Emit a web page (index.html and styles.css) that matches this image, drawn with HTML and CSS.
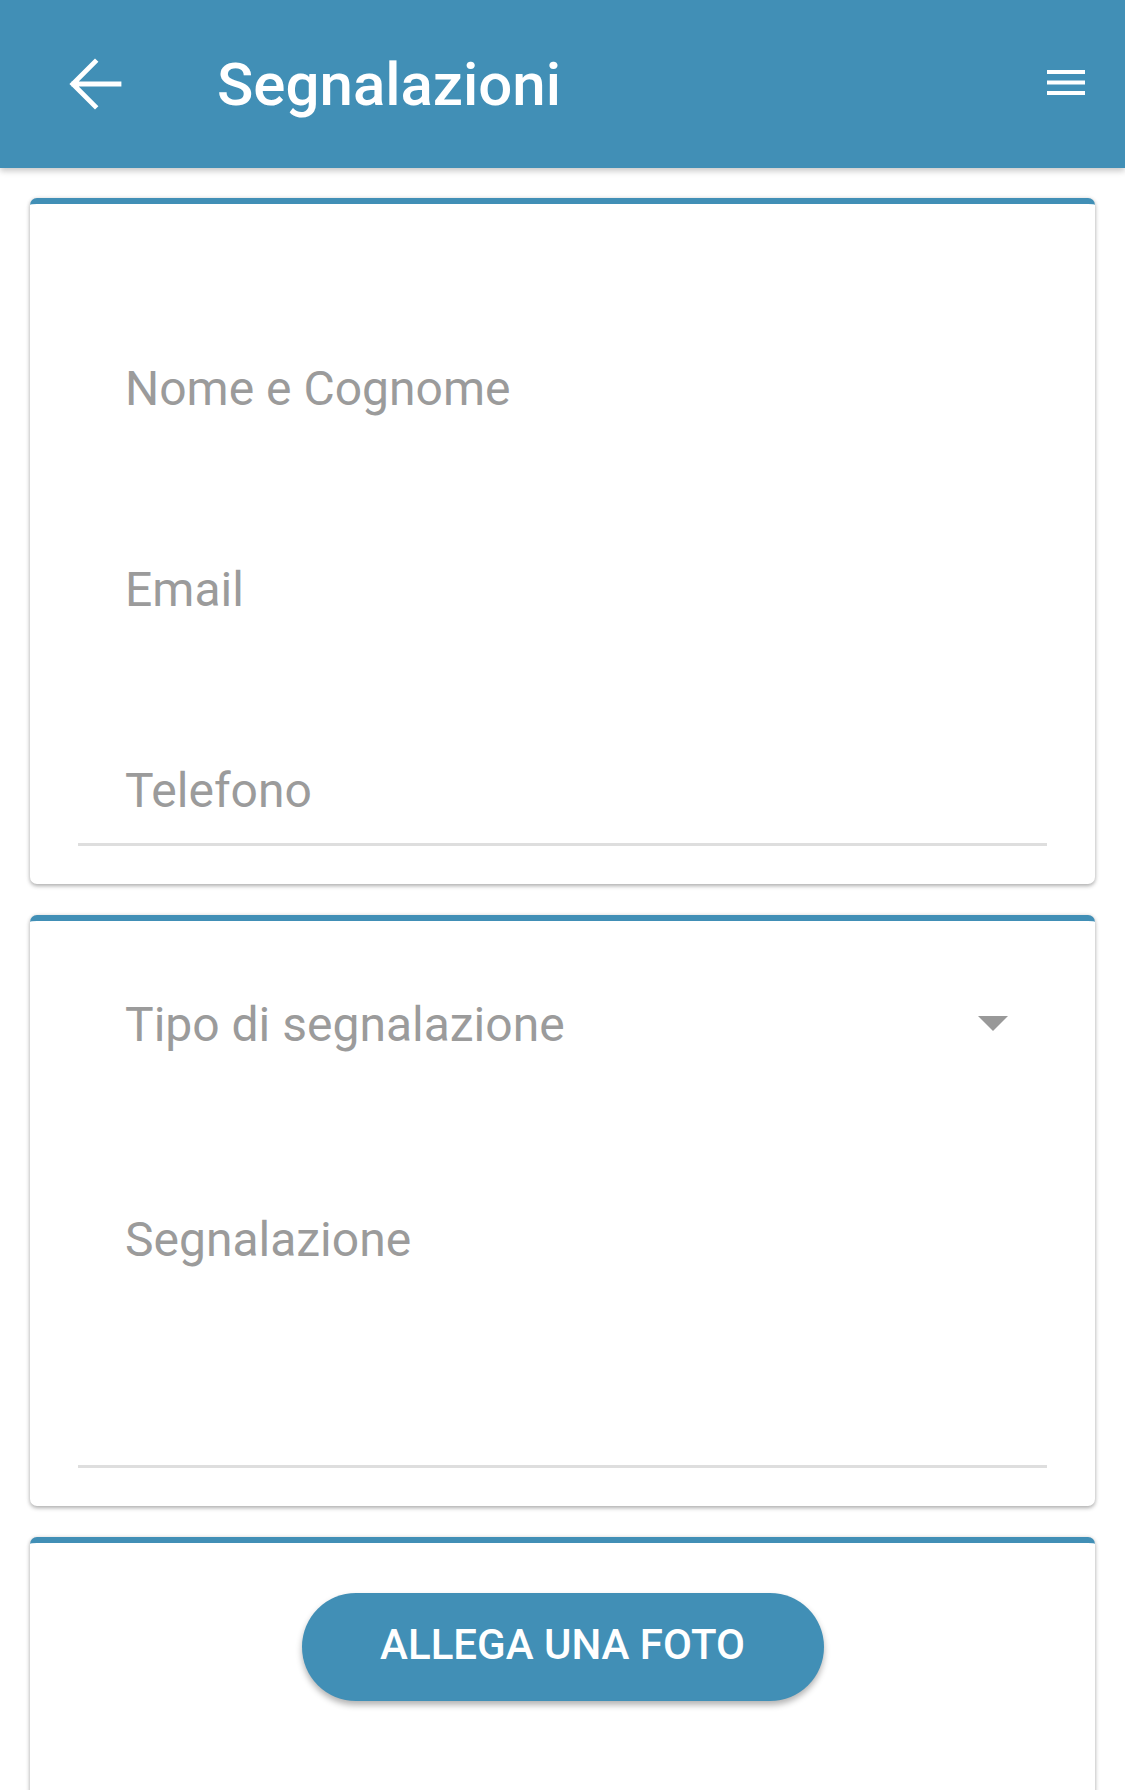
FILE: index.html
```html
<!DOCTYPE html>
<html lang="it">
<head>
<meta charset="utf-8">
<title>Segnalazioni</title>
<link rel="stylesheet" href="styles.css">
</head>
<body>
<header class="toolbar">
  <button class="back-btn" aria-label="Indietro">
    <svg class="back-icon" width="72" height="72" viewBox="0 0 24 24">
      <path d="M20 12H4.9M12 4.6L4.6 12L12 19.4" fill="none" stroke="#ffffff" stroke-width="1.6" stroke-linecap="square"/>
    </svg>
  </button>
  <h1 class="title">Segnalazioni</h1>
  <button class="menu-btn" aria-label="Menu">
    <svg width="38" height="26" viewBox="0 0 38 26">
      <rect x="0" y="0" width="38" height="4" fill="#ffffff"/>
      <rect x="0" y="10.5" width="38" height="4" fill="#ffffff"/>
      <rect x="0" y="21" width="38" height="4" fill="#ffffff"/>
    </svg>
  </button>
</header>

<main class="content">
  <section class="card card-contact">
    <div class="fields fields-contact">
      <div class="label">Nome e Cognome</div>
      <div class="label">Email</div>
      <div class="label">Telefono</div>
    </div>
  </section>

  <section class="card card-report">
    <div class="fields fields-report">
      <div class="select-row">
        <div class="label">Tipo di segnalazione</div>
        <span class="caret"></span>
      </div>
      <div class="label label-textarea">Segnalazione</div>
    </div>
  </section>

  <section class="card card-photo">
    <button class="photo-btn">ALLEGA UNA FOTO</button>
  </section>
</main>
</body>
</html>
```

FILE: styles.css
```css
* {
  box-sizing: border-box;
}

html, body {
  margin: 0;
  padding: 0;
  background: #ffffff;
}

body {
  font-family: Roboto, "Noto Sans", "Liberation Sans", sans-serif;
  width: 1125px;
  height: 1790px;
  overflow: hidden;
}

.toolbar {
  height: 168px;
  background: #418fb6;
  display: flex;
  align-items: center;
  padding-left: 59px;
  padding-right: 40px;
  box-shadow: 0 3px 6px rgba(0, 0, 0, 0.22);
  position: relative;
  z-index: 2;
}

.back-btn,
.menu-btn {
  border: 0;
  background: transparent;
  padding: 0;
  margin: 0;
  display: flex;
  align-items: center;
  justify-content: center;
}

.back-icon {
  display: block;
}

.title {
  margin: 0 0 0 86px;
  color: #ffffff;
  font-family: Roboto, "Liberation Sans", sans-serif;
  font-weight: 500;
  font-size: 60px;
  line-height: 1;
  padding-top: 2px;
}

.menu-btn {
  margin-left: auto;
  margin-top: -2px;
}

.content {
  padding: 30px 30px 0;
  display: flex;
  flex-direction: column;
  gap: 31px;
}

.card {
  background: #ffffff;
  border-top: 6px solid #418fb6;
  border-radius: 7px;
  box-shadow: 0 2px 4px rgba(0, 0, 0, 0.3), 0 0 4px rgba(0, 0, 0, 0.08);
}

.fields {
  margin: 0 48px;
  border-bottom: 3px solid #dedede;
  padding-left: 47px;
  display: flex;
  flex-direction: column;
}

.label {
  font-size: 48px;
  line-height: 56px;
  height: 56px;
  color: #9b9b9b;
  white-space: nowrap;
}

.card-contact {
  padding: 157px 0 38px;
}

.fields-contact {
  gap: 145px;
  padding-bottom: 24px;
}

.card-report {
  padding: 76px 0 38px;
}

.fields-report {
  gap: 159px;
  padding-bottom: 197px;
}

.select-row {
  display: flex;
  align-items: center;
  justify-content: space-between;
  padding-right: 39px;
}

.caret {
  width: 0;
  height: 0;
  border-left: 15px solid transparent;
  border-right: 15px solid transparent;
  border-top: 15px solid #999999;
  margin-top: -4px;
}

.card-photo {
  padding: 50px 0 140px;
  border-radius: 7px 7px 0 0;
  display: flex;
  justify-content: center;
}

.photo-btn {
  width: 522px;
  height: 108px;
  border: 0;
  border-radius: 54px;
  background: #418fb6;
  color: #ffffff;
  font-family: Roboto, "Liberation Sans", sans-serif;
  font-weight: 500;
  font-size: 42px;
  line-height: 1;
  padding: 0 0 4px;
  box-shadow: 0 4px 6px rgba(0, 0, 0, 0.3);
}
```
